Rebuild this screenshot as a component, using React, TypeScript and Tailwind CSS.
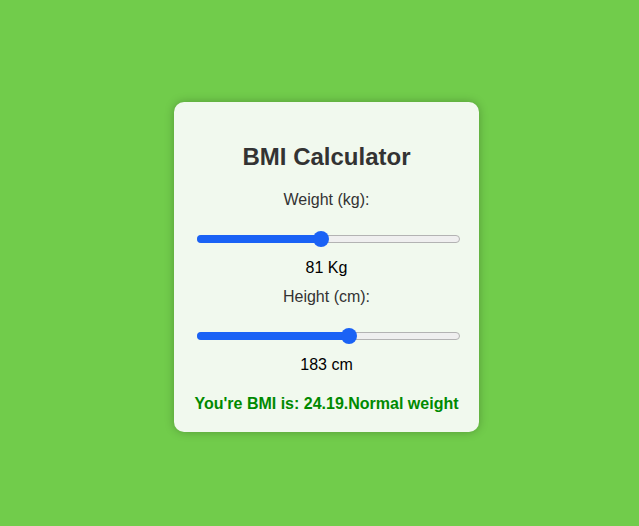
import React from "react";

function Slider({ frac }: { frac: number }) {
  const thumbLeft = frac * (263 - 16);
  return (
    <div className="relative h-4 w-[263px] self-center translate-x-[2px]">
      <div className="absolute left-0 right-0 top-1 h-2 rounded-full border border-[#b3b3b3] bg-[#efefef]" />
      <div
        className="absolute left-0 top-1 h-2 rounded-full bg-[#1a62f5]"
        style={{ width: thumbLeft + 8 }}
      />
      <div
        className="absolute top-0 h-4 w-4 rounded-full bg-[#1a62f5]"
        style={{ left: thumbLeft }}
      />
    </div>
  );
}

export default function App() {
  return (
    <div
      className="flex min-h-screen items-center justify-center bg-[#71cc4b] pl-[14px] pt-[8px]"
      style={{ fontFamily: '"Liberation Sans", Arial, sans-serif' }}
    >
      <div className="flex w-[305px] flex-col rounded-[10px] bg-[#f1f9ee] px-5 pt-5 pb-[19px] text-center shadow-[0_0_10px_rgba(0,0,0,0.25)]">
        <h1 className="mt-[21px] mb-5 h-7 text-[24px] leading-7 font-bold text-[#333]">BMI Calculator</h1>
        <div className="h-[18px] text-[16px] leading-[18px] text-[#333]">Weight (kg):</div>
        <div className="mt-[22px] flex flex-col">
          <Slider frac={0.47} />
        </div>
        <div className="mt-3 h-[18px] text-[16px] leading-[18px] text-black">81 Kg</div>
        <div className="mt-[11px] h-[18px] text-[16px] leading-[18px] text-[#333]">Height (cm):</div>
        <div className="mt-[22px] flex flex-col">
          <Slider frac={0.583} />
        </div>
        <div className="mt-3 h-[18px] text-[16px] leading-[18px] text-black">183 cm</div>
        <div className="mt-[21px] h-[18px] text-[16px] leading-[18px] font-bold text-[#008a00]">
          You're BMI is: 24.19.Normal weight
        </div>
      </div>
    </div>
  );
}
